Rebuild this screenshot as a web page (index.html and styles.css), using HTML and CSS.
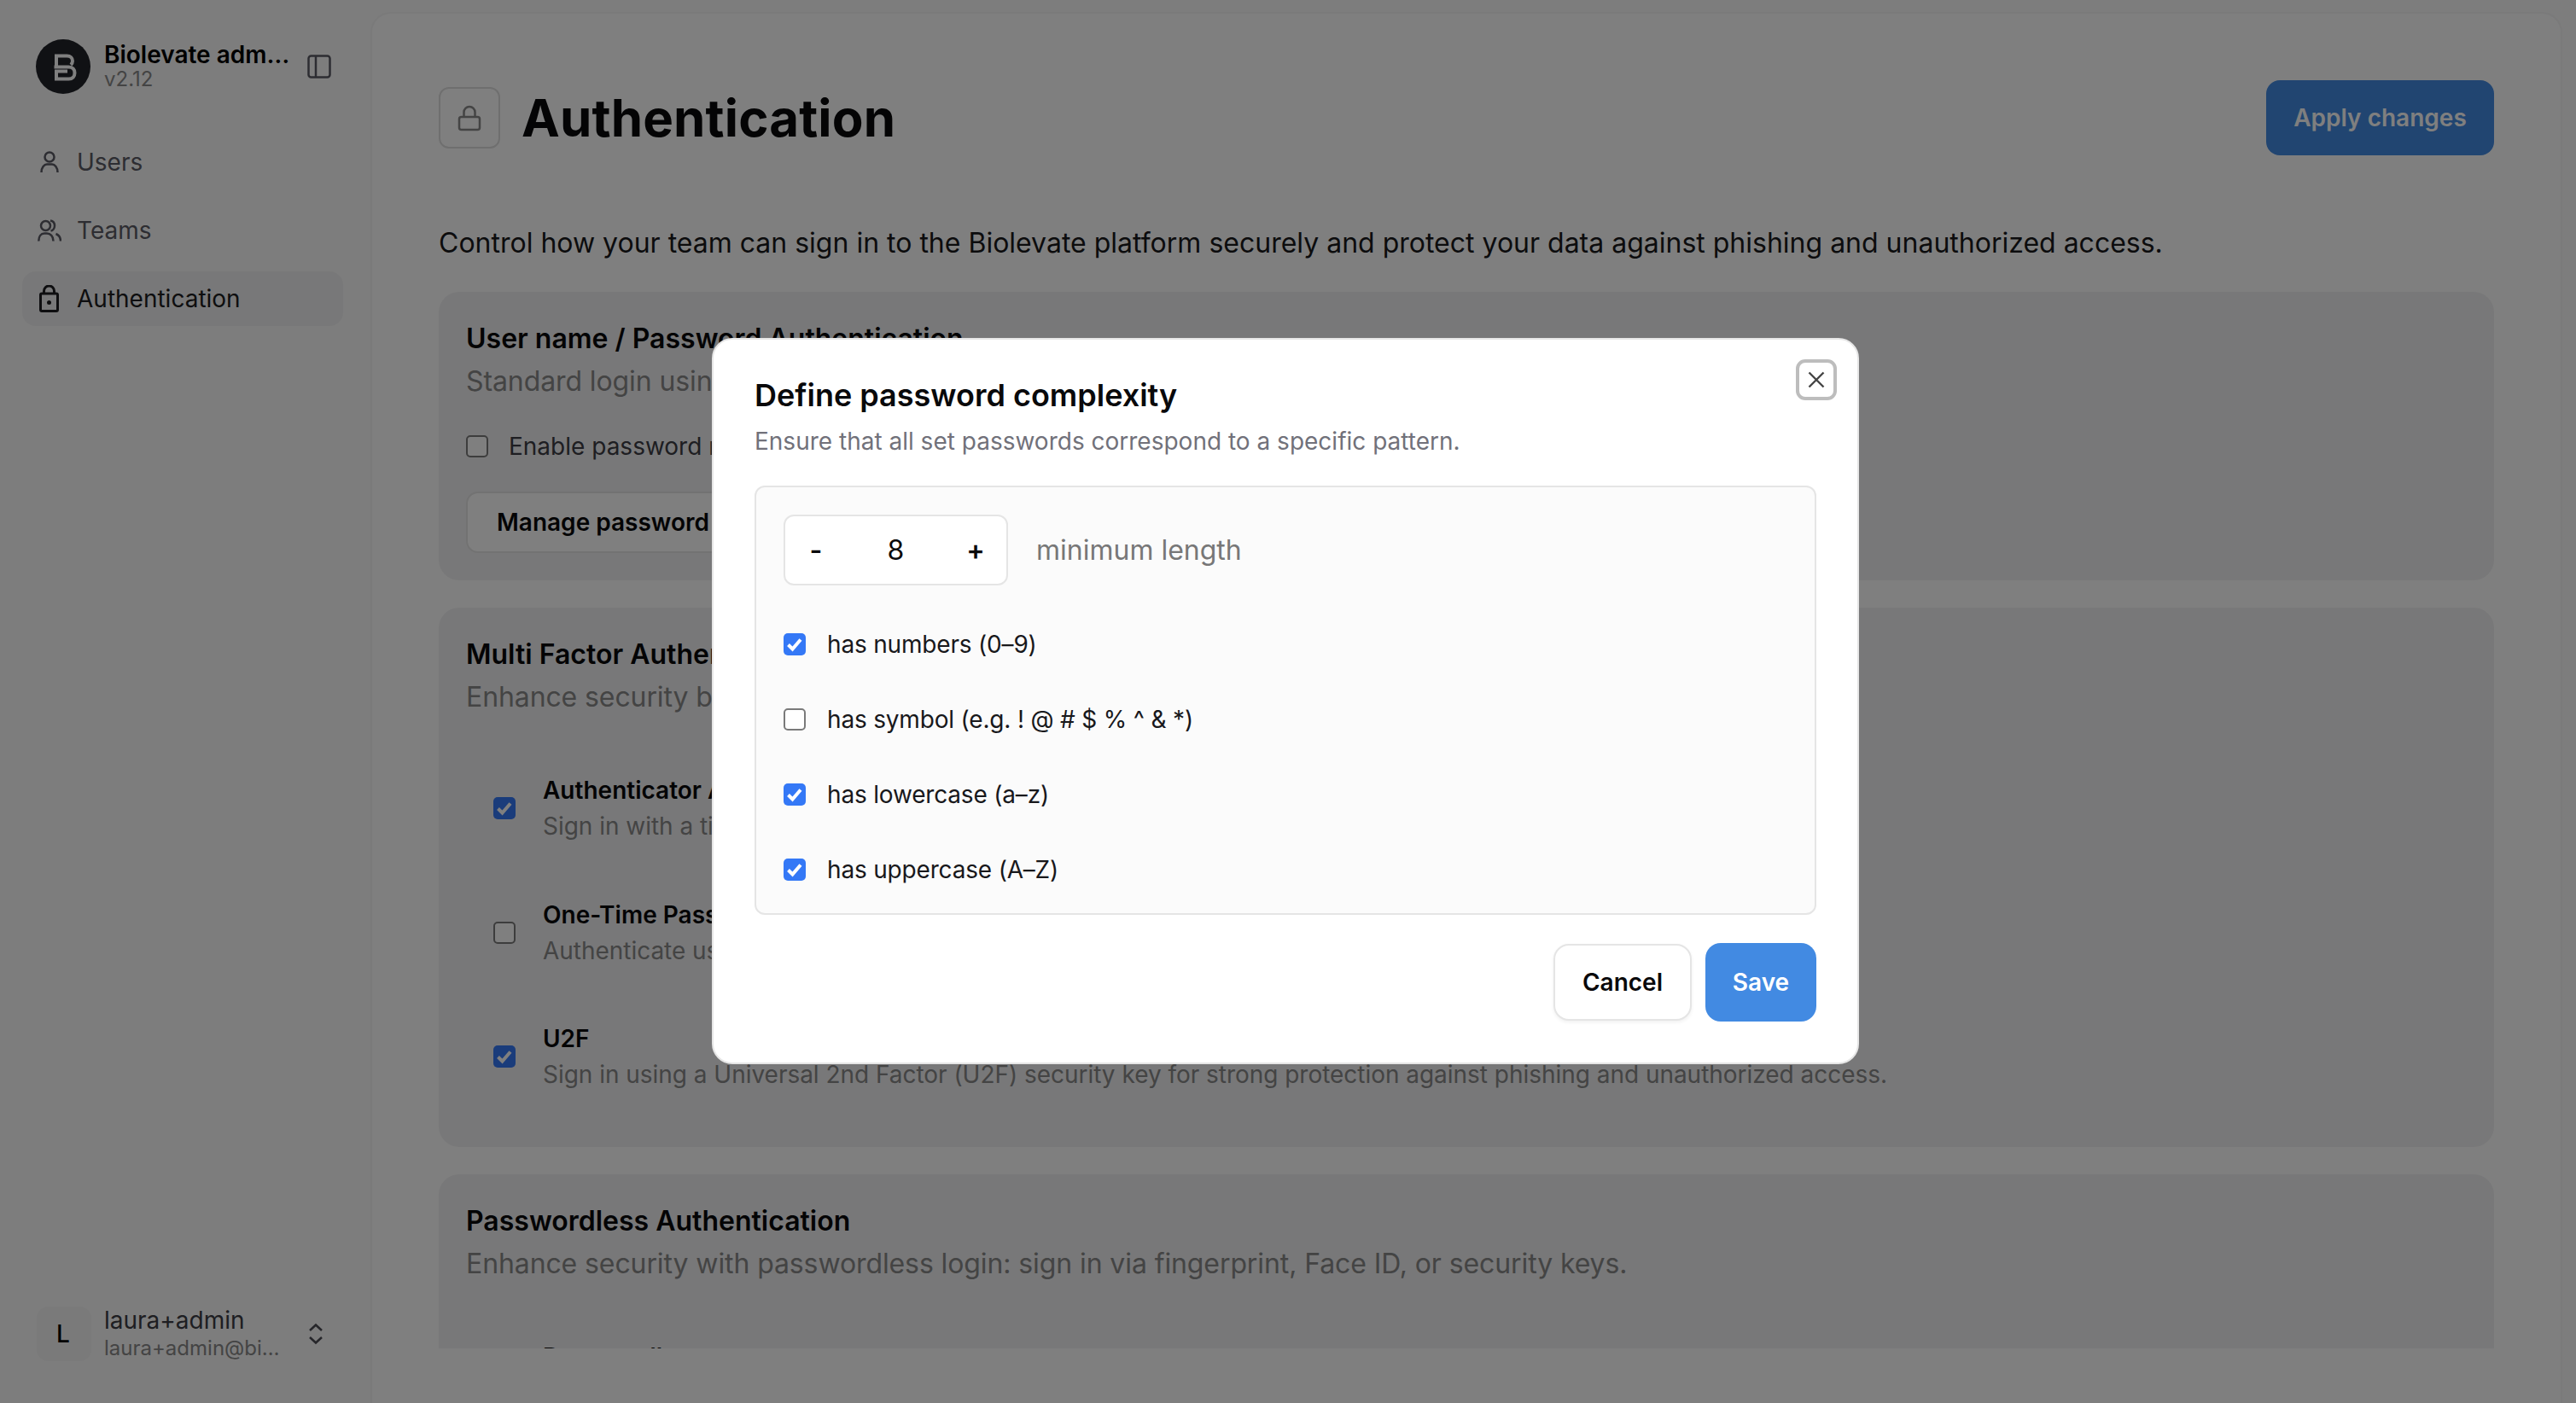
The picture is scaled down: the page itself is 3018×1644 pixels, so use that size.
FILE: index.html
```html
<!DOCTYPE html>
<html lang="en">
<head>
<meta charset="utf-8">
<title>Authentication</title>
<link rel="stylesheet" href="styles.css">
</head>
<body>
<div class="app">
  <aside class="sidebar">
    <div class="brand">
      <svg class="logo" width="64" height="64" viewBox="0 0 64 64">
        <circle cx="32" cy="32" r="32" fill="#202228"/>
        <path d="M24 31V19.500H36.500C40.500 19.500 43 22 43 25.500C43 27.500 42 29 41 30" fill="none" stroke="#fff" stroke-width="4"/>
        <path d="M21.500 32.500H38.500C43 32.500 45.500 35.500 45.500 39.500C45.500 43.500 43 46.500 38.500 46.500H24V37.500H37" fill="none" stroke="#fff" stroke-width="4"/>
      </svg>
      <div class="brand-text">
        <div class="brand-name">Biolevate admin portal</div>
        <div class="brand-version">v2.12</div>
      </div>
      <svg class="panel-icon" width="28" height="28" viewBox="0 0 28 28" fill="none" stroke="#5a5a64" stroke-width="2.500">
        <rect x="1.500" y="1.500" width="25" height="25" rx="3"/>
        <path d="M10 1.500V26.500"/>
      </svg>
    </div>
    <nav class="nav">
      <a class="nav-item">
        <svg class="nav-icon" width="28" height="32" viewBox="0 -2 28 32" fill="none" stroke="currentColor" stroke-width="2.500">
          <circle cx="14" cy="8" r="5.500"/>
          <path d="M4.500 26C4.500 20 8 16.500 11 16.500H17C20 16.500 23.500 20 23.500 26"/>
        </svg>
        <span>Users</span>
      </a>
      <a class="nav-item">
        <svg class="nav-icon" width="28" height="32" viewBox="0 -2 28 32" fill="none" stroke="currentColor" stroke-width="2.500">
          <circle cx="9.500" cy="8.500" r="5.500"/>
          <path d="M1.300 26.500C1.300 21 4 17.500 8 17.500H11C15 17.500 18.500 21 18.500 26.500"/>
          <path d="M15 2.500C18 3 20 5.500 20 8.500C20 11.500 18 14 15.500 14.500"/>
          <path d="M21.500 18C25 19.500 27 22.500 27 26.500"/>
        </svg>
        <span>Teams</span>
      </a>
      <a class="nav-item active">
        <svg class="nav-icon" width="28" height="32" viewBox="0 0 28 32" fill="none" stroke="currentColor" stroke-width="3">
          <rect x="3.500" y="10" width="20" height="20.500" rx="1.500"/>
          <path d="M7.500 10V7A6 6 0 0 1 19.500 7V10"/>
          <circle cx="13.500" cy="20.500" r="2.500" fill="currentColor" stroke="none"/>
        </svg>
        <span>Authentication</span>
      </a>
    </nav>
    <div class="account">
      <div class="avatar">L</div>
      <div class="account-text">
        <div class="account-name">laura+admin</div>
        <div class="account-mail">laura+admin@biolevate.com</div>
      </div>
      <svg class="updown" width="18" height="26" viewBox="0 0 18 26" fill="none" stroke="#4c4c54" stroke-width="2.500">
        <path d="M2 9L9 2.500L16 9"/>
        <path d="M2 17L9 23.500L16 17"/>
      </svg>
    </div>
  </aside>

  <main class="panel">
    <header class="page-head">
      <div class="head-left">
        <div class="head-icon">
          <svg width="28" height="32" viewBox="0 0 28 32" fill="none" stroke="#888" stroke-width="2.500">
            <rect x="2" y="15" width="24" height="15" rx="2.500"/>
            <path d="M7.500 15V9.500A6.500 6.500 0 0 1 20.500 9.500V15"/>
          </svg>
        </div>
        <h1 class="page-title">Authentication</h1>
      </div>
      <button class="btn-apply">Apply changes</button>
    </header>
    <div class="scroll">
      <p class="page-desc">Control how your team can sign in to the Biolevate platform securely and protect your data against phishing and unauthorized access.</p>

      <section class="card card-first">
        <h2 class="card-title">User name / Password Authentication</h2>
        <p class="card-sub">Standard login using a user name and a password.</p>
        <label class="simple-check">
          <span class="cb"></span>
          <span>Enable password requirements for this organization</span>
        </label>
        <button class="btn-outline">Manage password complexity</button>
      </section>

      <section class="card card-list">
        <h2 class="card-title">Multi Factor Authentication</h2>
        <p class="card-sub">Enhance security by adding a second authentication factor to the sign in process.</p>
        <div class="options">
          <div class="option">
            <span class="cb on"><svg width="26" height="26" viewBox="0 0 26 26" fill="none" stroke="#fff" stroke-width="4"><path d="M5.500 13.500L10.500 18.500L20 7.500"/></svg></span>
            <div>
              <div class="opt-title">Authenticator App</div>
              <div class="opt-sub">Sign in with a time-based code generated by an authenticator application on your device.</div>
            </div>
          </div>
          <div class="option">
            <span class="cb"></span>
            <div>
              <div class="opt-title">One-Time Password</div>
              <div class="opt-sub">Authenticate using a one-time password that is sent to you by email or by text message.</div>
            </div>
          </div>
          <div class="option">
            <span class="cb on"><svg width="26" height="26" viewBox="0 0 26 26" fill="none" stroke="#fff" stroke-width="4"><path d="M5.500 13.500L10.500 18.500L20 7.500"/></svg></span>
            <div>
              <div class="opt-title">U2F</div>
              <div class="opt-sub">Sign in using a Universal 2nd Factor (U2F) security key for strong protection against phishing and unauthorized access.</div>
            </div>
          </div>
        </div>
      </section>

      <section class="card card-list">
        <h2 class="card-title">Passwordless Authentication</h2>
        <p class="card-sub">Enhance security with passwordless login: sign in via fingerprint, Face ID, or security keys.</p>
        <div class="options">
          <div class="option">
            <span class="cb"></span>
            <div>
              <div class="opt-title">Passwordless</div>
              <div class="opt-sub">Sign in with a passkey stored on your device.</div>
            </div>
          </div>
        </div>
      </section>
    </div>
  </main>
</div>

<div class="overlay">
  <div class="modal" role="dialog">
    <button class="modal-close" aria-label="Close">
      <svg width="20" height="20" viewBox="0 0 20 20" fill="none" stroke="#444" stroke-width="2.400"><path d="M1.500 1.500L18.500 18.500M18.500 1.500L1.500 18.500"/></svg>
    </button>
    <h2 class="modal-title">Define password complexity</h2>
    <p class="modal-sub">Ensure that all set passwords correspond to a specific pattern.</p>
    <div class="rules">
      <div class="length-row">
        <div class="stepper">
          <span class="step-btn">-</span>
          <span class="step-val">8</span>
          <span class="step-btn">+</span>
        </div>
        <span class="length-label">minimum length</span>
      </div>
      <label class="rule"><span class="cb on"><svg width="26" height="26" viewBox="0 0 26 26" fill="none" stroke="#fff" stroke-width="4"><path d="M5.500 13.500L10.500 18.500L20 7.500"/></svg></span><span>has numbers (0–9)</span></label>
      <label class="rule"><span class="cb"></span><span>has symbol (e.g. ! @ # $ % ^ &amp; *)</span></label>
      <label class="rule"><span class="cb on"><svg width="26" height="26" viewBox="0 0 26 26" fill="none" stroke="#fff" stroke-width="4"><path d="M5.500 13.500L10.500 18.500L20 7.500"/></svg></span><span>has lowercase (a–z)</span></label>
      <label class="rule"><span class="cb on"><svg width="26" height="26" viewBox="0 0 26 26" fill="none" stroke="#fff" stroke-width="4"><path d="M5.500 13.500L10.500 18.500L20 7.500"/></svg></span><span>has uppercase (A–Z)</span></label>
    </div>
    <div class="modal-actions">
      <button class="btn-cancel">Cancel</button>
      <button class="btn-save">Save</button>
    </div>
  </div>
</div>
</body>
</html>
```

FILE: styles.css
```css
* { box-sizing: border-box; }
html, body { margin: 0; height: 100%; overflow: hidden; }
body {
  font-family: Inter, "Noto Sans", "Liberation Sans", sans-serif;
  background: #fafafa;
  color: #09090b;
}
h1, h2, p { margin: 0; }
button { font-family: inherit; cursor: pointer; }

.app { display: flex; height: 100vh; }

/* sidebar */
.sidebar {
  width: 434px;
  flex: none;
  display: flex;
  flex-direction: column;
  padding: 46px 32px 48px 26px;
}
.brand { display: flex; align-items: center; padding-left: 16px; }
.logo { flex: none; }
.brand-text { width: 220px; margin: 0 0 3px 16px; }
.brand-name {
  font-size: 28px; line-height: 34px; font-weight: 600; color: #000;
  white-space: nowrap; overflow: hidden; text-overflow: ellipsis;
}
.brand-version { font-size: 24px; line-height: 26px; color: #888; margin-top: -1px; }
.panel-icon { margin-left: 18px; flex: none; }

.nav { display: flex; flex-direction: column; gap: 16px; margin-top: 48px; }
.nav-item {
  display: flex; align-items: center; gap: 18px;
  height: 64px; padding-left: 18px; border-radius: 16px;
  font-size: 28px; color: #5a5a64;
}
.nav-icon { flex: none; }
.nav-item.active { background: #f1f1f2; color: #1c1c20; }

.account { margin-top: auto; display: flex; align-items: center; padding-left: 17px; }
.avatar {
  width: 64px; height: 64px; flex: none; border-radius: 14px;
  background: #f4f4f5; color: #000;
  display: flex; align-items: center; justify-content: center;
  font-size: 28px; font-weight: 500; padding-right: 2px;
}
.account-text { width: 206px; margin-left: 15px; }
.account-name { font-size: 28px; line-height: 34px; color: #3c3c44; white-space: nowrap; }
.account-mail {
  font-size: 24px; line-height: 32px; color: #888;
  white-space: nowrap; overflow: hidden; text-overflow: ellipsis;
}
.updown { margin-left: 33px; flex: none; }

/* main panel */
.panel {
  flex: 1;
  margin: 14px 16px -20px 0;
  padding: 78px 78px 0;
  background: #fff;
  border: 2px solid #f4f4f5;
  border-bottom: 0;
  border-radius: 24px 24px 0 0;
  display: flex;
  flex-direction: column;
  min-width: 0;
}
.page-head { display: flex; align-items: center; justify-content: space-between; height: 88px; flex: none; }
.head-left { display: flex; align-items: center; gap: 25px; }
.head-icon {
  width: 72px; height: 72px; border: 2px solid #dedede; border-radius: 12px;
  display: flex; align-items: center; justify-content: center;
}
.page-title { font-size: 60px; line-height: 72px; font-weight: 700; color: #09090b; letter-spacing: .15px; }
.btn-apply {
  width: 267px; height: 88px; border: 0; border-radius: 16px;
  background: #428ae2; color: #fff;
  font-size: 28px; font-weight: 600;
}
.scroll { height: 1398px; overflow: hidden; flex: none; }
.page-desc { margin: 79px 0 33px; font-size: 32px; line-height: 48px; color: #18181b; }

.card {
  background: #f1f1f2; border-radius: 24px;
  padding: 35px 32px 32px;
  margin-bottom: 32px;
}
.card-title { font-size: 32px; line-height: 40px; font-weight: 600; color: #09090b; }
.card-sub { margin-top: 10px; font-size: 32px; line-height: 40px; color: #888; letter-spacing: -.1px; }
.simple-check { display: flex; align-items: center; gap: 24px; margin-top: 36px; height: 40px; font-size: 28px; color: #3c3c44; }
.btn-outline {
  display: block; margin-top: 33px; height: 72px; padding: 0 34px;
  background: #fff; border: 2px solid #e5e5e5; border-radius: 14px;
  font-size: 28px; font-weight: 600; color: #09090b;
}
.options { margin-top: 71px; padding-left: 32px; display: flex; flex-direction: column; gap: 67.500px; padding-bottom: 35px; }
.option { display: flex; align-items: center; gap: 32px; }
.opt-title { font-size: 28px; line-height: 36px; font-weight: 600; color: #09090b; }
.opt-sub { margin-top: 6px; font-size: 28px; line-height: 36px; color: #888; letter-spacing: -.03px; }

/* checkbox */
.cb {
  width: 26px; height: 26px; flex: none; display: block;
  background: #fff; border: 2px solid #7a7a7a; border-radius: 5px;
}
.cb.on { border: 0; background: #3478f6; }
.cb svg { display: block; }

/* overlay + modal */
.overlay {
  position: fixed; inset: 0;
  padding: 0 6px 1px 0;
  background: rgba(0, 0, 0, .5);
  display: flex; align-items: center; justify-content: center;
}
.modal {
  position: relative;
  width: 1344px;
  padding: 41px 48px 48px;
  background: #fff;
  border: 2px solid #e6e6e6;
  border-radius: 24px;
}
.modal-close {
  position: absolute; top: 23px; right: 24px;
  width: 48px; height: 48px; padding: 0;
  background: #fff; border: 4px solid #bdbdbd; border-radius: 11px;
  display: flex; align-items: center; justify-content: center;
}
.modal-title { font-size: 36px; line-height: 48px; font-weight: 600; color: #09090b; }
.modal-sub { margin-top: 10px; font-size: 28px; line-height: 40px; color: #71717a; }
.rules {
  margin-top: 32px; padding: 32px 32px 33px;
  background: #fbfbfb; border: 2px solid #e5e5e5; border-radius: 12px;
}
.length-row { display: flex; align-items: center; gap: 33px; }
.stepper {
  width: 263px; height: 83px;
  display: grid; grid-template-columns: 72px 1fr 72px; align-items: center; text-align: center;
  background: #fff; border: 2px solid #e5e5e5; border-radius: 12px;
  font-size: 32px; color: #09090b;
}
.step-btn { font-weight: 600; }
.length-label { font-size: 32px; color: #777; }
.rule { display: flex; align-items: center; gap: 25px; height: 36px; margin-top: 52px; font-size: 28px; color: #18181b; letter-spacing: -.18px; }
.length-row + .rule { margin-top: 51px; }
.modal-actions { display: flex; justify-content: flex-end; align-items: center; gap: 16px; margin-top: 33px; }
.btn-cancel {
  width: 162px; height: 90px; background: #fff;
  border: 2px solid #e5e5e5; border-radius: 18px; box-shadow: 0 2px 4px rgba(0,0,0,.06);
  font-size: 28px; font-weight: 600; color: #09090b;
}
.btn-save {
  width: 130px; height: 92px; border: 0; border-radius: 18px;
  background: #428ae2; color: #fff;
  font-size: 28px; font-weight: 600;
}
```
